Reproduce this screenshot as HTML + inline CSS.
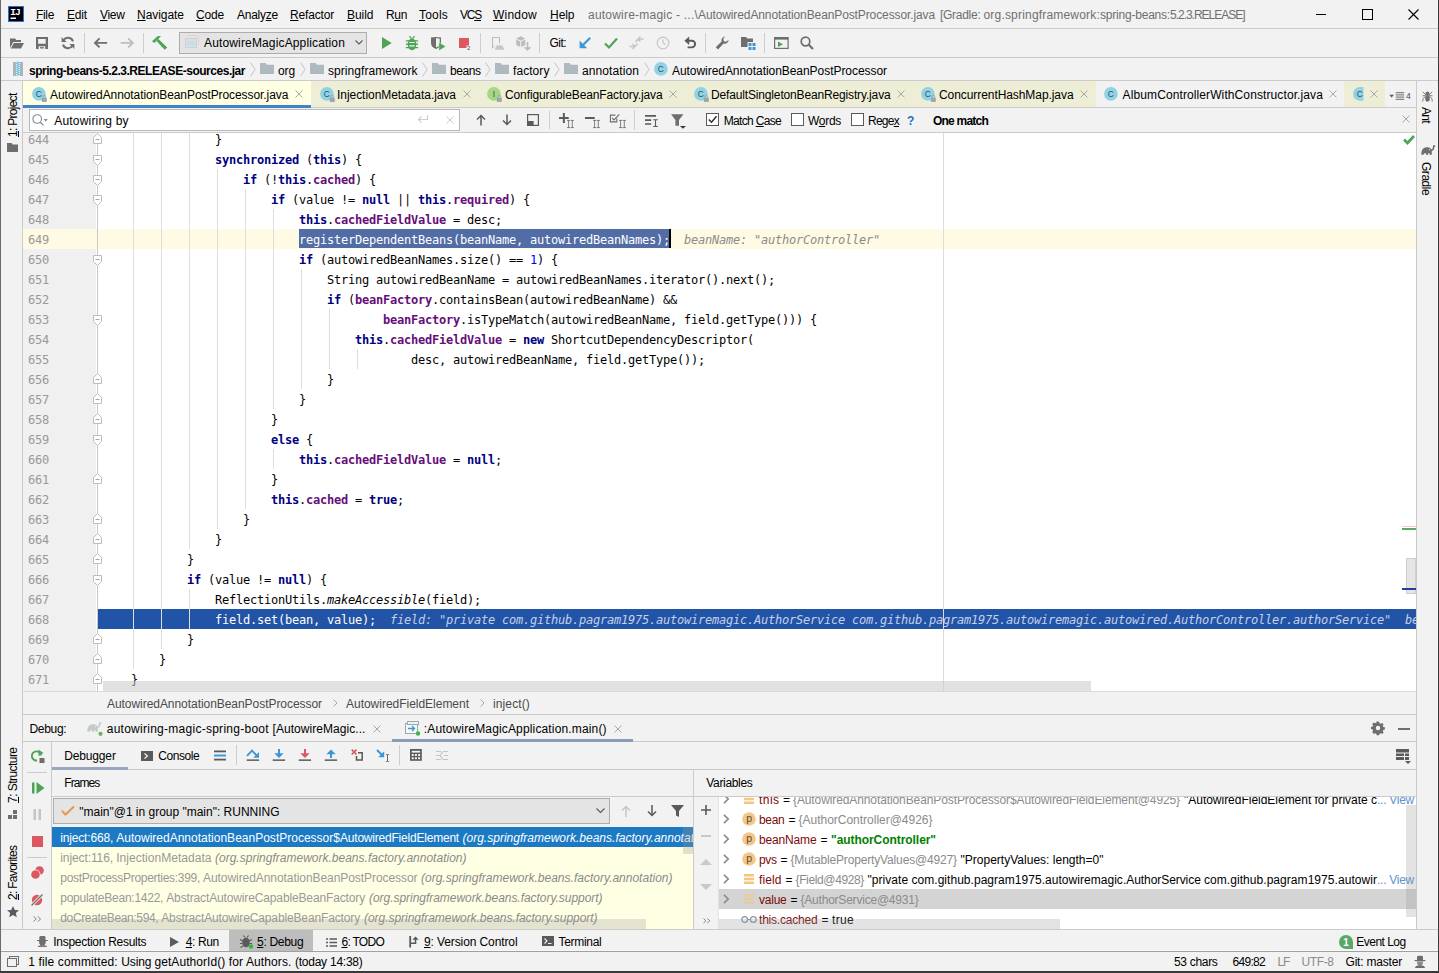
<!DOCTYPE html>
<html><head><meta charset="utf-8"><title>autowire-magic</title><style>
*{box-sizing:border-box;margin:0;padding:0}
html,body{width:1439px;height:973px;overflow:hidden;background:#f2f2f2}
body{font-family:"Liberation Sans",sans-serif;font-size:12px;color:#000;position:relative}
.a{position:absolute;white-space:pre}
.t{position:absolute;white-space:pre;line-height:16px;height:16px}
.m{font-family:"DejaVu Sans Mono","Liberation Mono",monospace;font-size:12px;letter-spacing:-0.2246px}
.hl{position:absolute;background:#cbcbcb}
.vl{position:absolute;background:#cbcbcb;width:1px}
u{text-decoration:underline;text-underline-offset:1px}
.kw{color:#000080;font-weight:bold}
.fd{color:#660e7a;font-weight:bold}
.nm{color:#0000ff}
.it{font-style:italic}
.hint{color:#8c8c8c;font-style:italic}
svg{position:absolute;overflow:visible}
</style></head><body>
<div class="t" style="left:36px;top:7px;letter-spacing:-0.340px;"><u>F</u>ile</div>
<div class="t" style="left:67px;top:7px;letter-spacing:-0.176px;"><u>E</u>dit</div>
<div class="t" style="left:100px;top:7px;letter-spacing:-0.328px;"><u>V</u>iew</div>
<div class="t" style="left:137px;top:7px;letter-spacing:-0.047px;"><u>N</u>avigate</div>
<div class="t" style="left:196px;top:7px;letter-spacing:-0.176px;"><u>C</u>ode</div>
<div class="t" style="left:237px;top:7px;letter-spacing:-0.246px;">Analy<u>z</u>e</div>
<div class="t" style="left:290px;top:7px;letter-spacing:-0.170px;"><u>R</u>efactor</div>
<div class="t" style="left:347px;top:7px;letter-spacing:-0.041px;"><u>B</u>uild</div>
<div class="t" style="left:386px;top:7px;letter-spacing:-0.349px;">R<u>u</u>n</div>
<div class="t" style="left:419px;top:7px;letter-spacing:0.197px;"><u>T</u>ools</div>
<div class="t" style="left:460px;top:7px;letter-spacing:-1.229px;">VC<u>S</u></div>
<div class="t" style="left:493px;top:7px;letter-spacing:0.219px;"><u>W</u>indow</div>
<div class="t" style="left:550px;top:7px;letter-spacing:-0.047px;"><u>H</u>elp</div>
<div class="t" style="left:588px;top:7px;color:#6f6f6f;letter-spacing:0.220px;">autowire-magic - ...\</div>
<div class="t" style="left:698px;top:7px;color:#6f6f6f;letter-spacing:-0.109px;">AutowiredAnnotationBeanPostProcessor.java</div>
<div class="t" style="left:940px;top:7px;color:#6f6f6f;letter-spacing:-0.281px;">[Gradle: </div>
<div class="t" style="left:983.5px;top:7px;color:#6f6f6f;letter-spacing:0.189px;">org.springframework:</div>
<div class="t" style="left:1100px;top:7px;color:#6f6f6f;letter-spacing:-0.209px;">spring-beans:</div>
<div class="t" style="left:1170px;top:7px;color:#6f6f6f;letter-spacing:-1.016px;">5.2.3.RELEASE]</div>
<svg style="left:8px;top:6px" width="16" height="16" viewBox="0 0 16 16"><rect x="0.5" y="0.5" width="15" height="15" fill="#000" stroke="#2b6fd6" stroke-width="1"/><text x="2.300" y="9.300" font-family="Liberation Mono,monospace" font-weight="bold" font-size="9.500" fill="#fff" letter-spacing="-0.900">IJ</text><rect x="2.500" y="11.500" width="5.500" height="1.500" fill="#fff"/></svg>
<svg style="left:1316px;top:8px" width="10" height="12" viewBox="0 0 10 12"><path d="M0 6.500H10" stroke="#000" stroke-width="1" fill="none"/></svg>
<svg style="left:1362px;top:9px" width="11" height="11" viewBox="0 0 11 11"><rect x="0.5" y="0.5" width="10" height="10" stroke="#000" stroke-width="1" fill="none"/></svg>
<svg style="left:1408px;top:9px" width="11" height="11" viewBox="0 0 11 11"><path d="M0.5 0.5L10.5 10.5M10.5 0.5L0.5 10.5" stroke="#000" stroke-width="1.1" fill="none"/></svg>
<div class="a" style="left:0px;top:28px;width:1439px;height:1px;background:#cbcbcb;"></div>
<svg style="left:10px;top:37px" width="14" height="12" viewBox="0 0 14 12"><path d="M0 1.5h5l1.5 1.5H11v2H3.2L0 11z" fill="#6e6e6e"/><path d="M3.8 6H14l-3 5.5H0.8z" fill="#6e6e6e"/></svg>
<svg style="left:36px;top:37px" width="12" height="12" viewBox="0 0 12 12"><path d="M0 0h12v12H0z M2.100 2.100v4.700h7.600V2.100z M2.600 9.200v2.800h6.600V9.200z" fill="#6e6e6e" fill-rule="evenodd"/><rect x="4" y="10.100" width="3.800" height="1.400" fill="#6e6e6e"/></svg>
<svg style="left:61px;top:36px" width="14" height="14" viewBox="0 0 14 14"><path d="M12 5.400A5.300 5.300 0 0 0 2.500 4.200" stroke="#6e6e6e" stroke-width="2" fill="none"/><path d="M0.600 1v5h5z" fill="#6e6e6e"/><path d="M2 8.600A5.300 5.300 0 0 0 11.500 9.800" stroke="#6e6e6e" stroke-width="2" fill="none"/><path d="M13.400 13V8H8.400z" fill="#6e6e6e"/></svg>
<div class="a" style="left:84px;top:33px;width:1px;height:20px;background:#cdcdcd;"></div>
<svg style="left:94px;top:37px" width="14" height="12" viewBox="0 0 14 12"><path d="M13.100 5.900H1.500M5.600 1.400L1 5.900l4.600 4.500" stroke="#6e6e6e" stroke-width="1.900" fill="none"/></svg>
<svg style="left:120px;top:37px" width="14" height="12" viewBox="0 0 14 12"><path d="M0.700 5.900H12.300M8.200 1.400l4.600 4.500-4.600 4.500" stroke="#bdbdbd" stroke-width="1.900" fill="none"/></svg>
<div class="a" style="left:143px;top:33px;width:1px;height:20px;background:#cdcdcd;"></div>
<svg style="left:152px;top:35px" width="16" height="16" viewBox="0 0 16 16"><path d="M0 6.300L5.800 1l3.200 0.200L2.300 8z" fill="#4fa357"/><path d="M6.400 4l8.800 8.500-2.500 2.300L4.500 6z" fill="#4fa357"/></svg>
<div class="a" style="left:179px;top:32px;width:188px;height:22px;border:1px solid #adadad;background:#e4e4e4;"></div>
<svg style="left:185px;top:35px" width="14" height="13" viewBox="0 0 14 13"><path d="M2.500 0.500h11v9" stroke="#d6d6d6" stroke-width="1" fill="none"/><rect x="0.500" y="3.500" width="11" height="9" fill="#dedede" stroke="#d0d0d0"/><rect x="2" y="6" width="8" height="5" fill="#bfe0ec"/></svg>
<div class="t" style="left:204px;top:35px;letter-spacing:0.150px;">AutowireMagicApplication</div>
<svg style="left:355px;top:40px" width="8" height="5" viewBox="0 0 8 5"><path d="M0.5 0.5L4 4l3.5-3.5" stroke="#5a5a5a" stroke-width="1.1" fill="none"/></svg>
<svg style="left:382px;top:37px" width="10" height="12" viewBox="0 0 10 12"><path d="M0 0L9.700 6 0 12z" fill="#4fa357"/></svg>
<svg style="left:405px;top:36px" width="14" height="15" viewBox="0 0 14 15"><path d="M4.500 0.200l2 2.400M9.500 0.200l-2 2.400" stroke="#4fa357" stroke-width="1.300"/><ellipse cx="7" cy="8.300" rx="4.400" ry="5.900" fill="#4fa357"/><path d="M0.800 4.800h12.400M0.800 8.200h12.400M0.800 11.700h12.400" stroke="#4fa357" stroke-width="1.300"/><path d="M4.300 6.500h5.400M4.300 9.900h5.400" stroke="#f2f2f2" stroke-width="1.100"/></svg>
<svg style="left:431px;top:37px" width="15" height="14" viewBox="0 0 15 14"><path d="M0 0.600C2 0.200 3.500 0 5 0c1.500 0 3 0.200 5 0.600V6c0 3-2 4.800-5 5.900C2 10.800 0 9 0 6z" fill="#6e6e6e"/><path d="M5 1.300c1.300 0 2.500 0.100 3.700 0.400V6c0 2.200-1.400 3.600-3.700 4.500z" fill="#f2f2f2"/><path d="M7.900 5.200L14.800 9.500 7.900 13.800z" fill="#4fa357" stroke="#f2f2f2" stroke-width="0.500"/></svg>
<svg style="left:459px;top:38px" width="13" height="13" viewBox="0 0 13 13"><rect x="0" y="0" width="10" height="10" fill="#db5860"/><rect x="7.500" y="7.500" width="4.500" height="5" fill="#f2f2f2"/><text x="8" y="12" font-size="6" font-family="Liberation Sans,sans-serif" fill="#4a4a6a">2</text></svg>
<div class="a" style="left:480px;top:33px;width:1px;height:20px;background:#cdcdcd;"></div>
<svg style="left:492px;top:37px" width="13" height="13" viewBox="0 0 13 13"><path d="M7.500 6.500V1.200a0.700 0.700 0 0 0-0.700-0.700H1.200a0.700 0.700 0 0 0-0.700 0.700V11.300" stroke="#bcbcbc" stroke-width="1.100" fill="none"/><path d="M0.500 10.500l1.800-1" stroke="#bcbcbc" stroke-width="1"/><path d="M3 12.800a4.500 4.500 0 0 1 9 0z" fill="#c3c7c9"/><path d="M4.300 7.500l1.200 1.600M10.700 7.500L9.500 9.100" stroke="#c3c7c9" stroke-width="0.800"/></svg>
<svg style="left:515.5px;top:36px" width="16" height="15" viewBox="0 0 16 15"><path d="M4.700 0.300L9.300 2.500 4.700 4.700 0.200 2.500z" fill="#bcbcbc"/><path d="M0.200 3.500L4.200 5.500V11L0.200 8.900z" fill="#bcbcbc"/><path d="M9.300 3.500L5.300 5.500V11L9.300 8.900z" fill="#bcbcbc"/><path d="M11.500 6v6" stroke="#bcbcbc" stroke-width="1.700"/><path d="M7.600 11.300h7.800L11.500 15z" fill="#bcbcbc"/></svg>
<div class="a" style="left:539px;top:33px;width:1px;height:20px;background:#cdcdcd;"></div>
<div class="t" style="left:549.5px;top:35px;letter-spacing:-0.543px;">Git:</div>
<svg style="left:579px;top:37px" width="12" height="12" viewBox="0 0 12 12"><path d="M11.200 0.800L4 8" stroke="#3c97d8" stroke-width="2.200" fill="none"/><path d="M0.600 3.600v7.600h7.600z" fill="#3c97d8"/></svg>
<svg style="left:604px;top:37px" width="14" height="12" viewBox="0 0 14 12"><path d="M1 6.5l4 4L13 1.5" stroke="#4fa357" stroke-width="2.2" fill="none"/></svg>
<svg style="left:629px;top:36px" width="15" height="14" viewBox="0 0 15 14"><path d="M14.500 3H9M11.500 0.500L9 3l2.500 2.500M9 3L6.500 6" stroke="#c6c6c6" stroke-width="1.400" fill="none"/><path d="M0.500 10.500H6M3.500 8L6 10.500 3.500 13M6 10.500L8.500 7.500" stroke="#c6c6c6" stroke-width="1.400" fill="none"/></svg>
<svg style="left:656px;top:36px" width="14" height="14" viewBox="0 0 14 14"><circle cx="7" cy="7" r="5.8" stroke="#c9c9c9" stroke-width="1.3" fill="none"/><path d="M7 3.5V7l2.5 1.8" stroke="#c9c9c9" stroke-width="1.3" fill="none"/></svg>
<svg style="left:684px;top:36px" width="12" height="14" viewBox="0 0 12 14"><path d="M3 4.800H7.800a3.300 3.300 0 0 1 0 6.600H3.600" stroke="#5a5a5a" stroke-width="1.900" fill="none"/><path d="M5.200 0.600L0.400 4.800l4.800 4.200z" fill="#5a5a5a"/></svg>
<div class="a" style="left:705px;top:33px;width:1px;height:20px;background:#cdcdcd;"></div>
<svg style="left:715px;top:36px" width="14" height="14" viewBox="0 0 14 14"><path d="M13.600 3.800A3.800 3.800 0 0 1 8.600 7.500L3 13.400 0.800 11.200 6.600 5.500A3.800 3.800 0 0 1 10.300 0.500L8.200 2.700 8.800 5.200 11.300 5.800z" fill="#6e6e6e"/></svg>
<svg style="left:741px;top:37px" width="15" height="13" viewBox="0 0 15 13"><path d="M0 0h5l1.500 1.500H12V10H0z" fill="#6e6e6e"/><rect x="6.500" y="5" width="8.500" height="8.500" fill="#f2f2f2"/><rect x="7.500" y="6" width="3" height="3" fill="#3c97d8"/><rect x="11.500" y="6" width="3" height="3" fill="#3c97d8"/><rect x="7.500" y="10" width="3" height="3" fill="#3c97d8"/><rect x="11.500" y="10" width="3" height="3" fill="#3c97d8"/></svg>
<div class="a" style="left:764px;top:33px;width:1px;height:20px;background:#cdcdcd;"></div>
<svg style="left:774px;top:37px" width="15" height="12" viewBox="0 0 15 12"><rect x="0.600" y="0.600" width="13.500" height="10.800" fill="none" stroke="#6e6e6e" stroke-width="1.200"/><rect x="0.600" y="0.600" width="13.500" height="2" fill="#6e6e6e"/><path d="M4 4.500L9 7.200 4 10z" fill="#4fa357"/></svg>
<svg style="left:800px;top:36px" width="14" height="14" viewBox="0 0 14 14"><circle cx="5.500" cy="5.500" r="4.300" stroke="#6e6e6e" stroke-width="1.700" fill="none"/><path d="M8.500 8.500l4.500 4.500" stroke="#6e6e6e" stroke-width="2.200"/></svg>
<div class="a" style="left:0px;top:57px;width:1439px;height:1px;background:#cbcbcb;"></div>
<svg style="left:13px;top:62px" width="10" height="14" viewBox="0 0 10 14"><rect x="0" y="0" width="10" height="14" fill="#a9b4bb"/><rect x="3.200" y="0" width="3.600" height="14" fill="#eef6f9"/><path d="M3.600 0L6.4 0.5L3.6 1.5L6.4 2.5L3.6 3.5L6.4 4.5L3.6 5.5L6.4 6.5L3.6 7.5L6.4 8.5L3.6 9.5L6.4 10.5L3.6 11.5L6.4 12.5L3.6 13.5" stroke="#3db2dc" stroke-width="0.800" fill="none"/></svg>
<div class="t" style="left:29px;top:63px;font-weight:bold;letter-spacing:-0.476px;">spring-beans-5.2.3.RELEASE-sources.jar</div>
<svg style="left:250px;top:62px" width="6" height="15" viewBox="0 0 6 15"><path d="M0.500 0.500L5 7.500 0.500 14.500" stroke="#c4c4c4" stroke-width="1" fill="none"/></svg>
<svg style="left:260px;top:63px" width="14" height="11" viewBox="0 0 14 11"><path d="M0 0h5.500l1.500 1.800H14V11H0z" fill="#aeb9c0"/></svg>
<div class="t" style="left:278px;top:63px;letter-spacing:-0.115px;">org</div>
<svg style="left:300px;top:62px" width="6" height="15" viewBox="0 0 6 15"><path d="M0.500 0.500L5 7.500 0.500 14.500" stroke="#c4c4c4" stroke-width="1" fill="none"/></svg>
<svg style="left:310px;top:63px" width="14" height="11" viewBox="0 0 14 11"><path d="M0 0h5.500l1.500 1.800H14V11H0z" fill="#aeb9c0"/></svg>
<div class="t" style="left:328px;top:63px;letter-spacing:0.053px;">springframework</div>
<svg style="left:422px;top:62px" width="6" height="15" viewBox="0 0 6 15"><path d="M0.500 0.500L5 7.500 0.500 14.500" stroke="#c4c4c4" stroke-width="1" fill="none"/></svg>
<svg style="left:432px;top:63px" width="14" height="11" viewBox="0 0 14 11"><path d="M0 0h5.500l1.500 1.800H14V11H0z" fill="#aeb9c0"/></svg>
<div class="t" style="left:450px;top:63px;letter-spacing:-0.441px;">beans</div>
<svg style="left:485px;top:62px" width="6" height="15" viewBox="0 0 6 15"><path d="M0.500 0.500L5 7.500 0.500 14.500" stroke="#c4c4c4" stroke-width="1" fill="none"/></svg>
<svg style="left:495px;top:63px" width="14" height="11" viewBox="0 0 14 11"><path d="M0 0h5.500l1.500 1.800H14V11H0z" fill="#aeb9c0"/></svg>
<div class="t" style="left:513px;top:63px;letter-spacing:0.069px;">factory</div>
<svg style="left:554px;top:62px" width="6" height="15" viewBox="0 0 6 15"><path d="M0.500 0.500L5 7.500 0.500 14.500" stroke="#c4c4c4" stroke-width="1" fill="none"/></svg>
<svg style="left:564px;top:63px" width="14" height="11" viewBox="0 0 14 11"><path d="M0 0h5.500l1.500 1.800H14V11H0z" fill="#aeb9c0"/></svg>
<div class="t" style="left:582px;top:63px;letter-spacing:0.094px;">annotation</div>
<svg style="left:644px;top:62px" width="6" height="15" viewBox="0 0 6 15"><path d="M0.500 0.500L5 7.500 0.500 14.500" stroke="#c4c4c4" stroke-width="1" fill="none"/></svg>
<svg style="left:654px;top:62px" width="15" height="15" viewBox="0 0 15 15"><circle cx="6.900" cy="6.900" r="6.800" fill="#8fd3e6"/><text x="6.900" y="9.900" text-anchor="middle" font-family="Liberation Sans,sans-serif" font-size="8.500" fill="#3e4a50">C</text></svg>
<div class="t" style="left:672px;top:63px;letter-spacing:-0.050px;">AutowiredAnnotationBeanPostProcessor</div>
<div class="a" style="left:0px;top:80px;width:1439px;height:1px;background:#cbcbcb;"></div>
<div class="a" style="left:22px;top:81px;width:1px;height:849px;background:#cbcbcb;"></div>
<div class="a" style="left:1416px;top:81px;width:1px;height:849px;background:#cbcbcb;"></div>
<div class="t" style="left:5px;top:137px;transform-origin:0 0;transform:rotate(-90deg);letter-spacing:-0.720px;"><u>1</u>: Project</div>
<svg style="left:7px;top:143px" width="11" height="9" viewBox="0 0 11 9"><path d="M0 0h4.500l1.200 1.500H11V9H0z" fill="#6e6e6e"/></svg>
<div class="t" style="left:5px;top:803px;transform-origin:0 0;transform:rotate(-90deg);letter-spacing:-0.546px;"><u>7</u>: Structure</div>
<svg style="left:8px;top:810px" width="9" height="9" viewBox="0 0 9 9"><rect x="5" y="0" width="4" height="4" fill="#6e6e6e"/><rect x="0" y="5" width="4" height="4" fill="#6e6e6e"/><rect x="5" y="5" width="4" height="4" fill="#6e6e6e"/></svg>
<div class="t" style="left:5px;top:900px;transform-origin:0 0;transform:rotate(-90deg);letter-spacing:-0.704px;"><u>2</u>: Favorites</div>
<svg style="left:7px;top:905.5px" width="12" height="11" viewBox="0 0 12 11"><path d="M6 0l1.800 3.900 4.200 0.400-3.200 2.800 1 4.100L6 9 2.200 11.200l1-4.100L0 4.300l4.200-0.400z" fill="#5a5a5a"/></svg>
<svg style="left:1422px;top:91px" width="11" height="11" viewBox="0 0 11 11"><circle cx="5.500" cy="2.300" r="1.900" fill="#6e6e6e"/><ellipse cx="5.500" cy="7.700" rx="2.300" ry="2.900" fill="#6e6e6e"/><rect x="4.700" y="3.500" width="1.600" height="2" fill="#6e6e6e"/><path d="M0.800 0.800L4.500 4.500M10.200 0.800L6.500 4.500M0.500 4.800L4.500 4.700M10.500 4.800L6.500 4.700M4.300 5.500C1.500 6 0.800 8 0.700 10.500M6.700 5.500C9.500 6 10.200 8 10.300 10.500" stroke="#6e6e6e" stroke-width="0.900" fill="none"/></svg>
<div class="t" style="left:1434px;top:107px;transform-origin:0 0;transform:rotate(90deg);letter-spacing:-0.672px;">Ant</div>
<svg style="left:1420.5px;top:145.3px" width="14" height="10" viewBox="0 0 14 10"><path d="M0.300 9.800C0.300 5.500 1.500 2.500 5.500 2.200C8.500 2 10.800 3.200 10.800 6V9.800H8.600V8.300H7.200V9.800H5V8.300H3.600L2.400 9.800z" fill="#6e6e6e"/><path d="M10 5.400C11.900 5.200 12.700 3.600 12.600 1.700C12.600 0.500 13.600 0.500 13.500 1.400" stroke="#6e6e6e" stroke-width="1.400" fill="none" stroke-linecap="round"/><circle cx="8.400" cy="4.600" r="0.600" fill="#f2f2f2"/></svg>
<div class="t" style="left:1434px;top:161.75px;transform-origin:0 0;transform:rotate(90deg);letter-spacing:-0.464px;">Gradle</div>
<div class="a" style="left:23px;top:81px;width:288px;height:27px;background:#ffffe4;"></div>
<div class="a" style="left:311px;top:81px;width:785px;height:27px;background:#eeeed6;"></div>
<div class="a" style="left:1344px;top:81px;width:41px;height:27px;background:#eeeed6;"></div>
<div class="a" style="left:311px;top:107px;width:1105px;height:1px;background:#cbcbcb;"></div>
<div class="a" style="left:23px;top:105px;width:288px;height:3px;background:#4083c9;"></div>
<svg style="left:32px;top:87px" width="15" height="15" viewBox="0 0 15 15"><circle cx="6.900" cy="6.900" r="6.800" fill="#8fd3e6"/><text x="6.900" y="9.900" text-anchor="middle" font-family="Liberation Sans,sans-serif" font-size="8.500" fill="#3e4a50">C</text><rect x="9.800" y="10.900" width="5" height="4" fill="#9aa7b0"/><path d="M10.900 11V9.600a1.400 1.400 0 0 1 2.800 0V11" stroke="#9aa7b0" stroke-width="1" fill="none"/></svg>
<div class="t" style="left:50px;top:87px;letter-spacing:-0.079px;">AutowiredAnnotationBeanPostProcessor.java</div>
<svg style="left:295px;top:90px" width="8" height="8" viewBox="0 0 8 8"><path d="M0.500 0.500l7 7M7.500 0.500l-7 7" stroke="#a8a8a8" stroke-width="1" fill="none"/></svg>
<svg style="left:320px;top:87px" width="15" height="15" viewBox="0 0 15 15"><circle cx="6.900" cy="6.900" r="6.800" fill="#8fd3e6"/><text x="6.900" y="9.900" text-anchor="middle" font-family="Liberation Sans,sans-serif" font-size="8.500" fill="#3e4a50">C</text><rect x="9.800" y="10.900" width="5" height="4" fill="#9aa7b0"/><path d="M10.900 11V9.600a1.400 1.400 0 0 1 2.800 0V11" stroke="#9aa7b0" stroke-width="1" fill="none"/></svg>
<div class="t" style="left:337px;top:87px;letter-spacing:-0.049px;">InjectionMetadata.java</div>
<svg style="left:463px;top:90px" width="8" height="8" viewBox="0 0 8 8"><path d="M0.500 0.500l7 7M7.500 0.500l-7 7" stroke="#a8a8a8" stroke-width="1" fill="none"/></svg>
<svg style="left:487px;top:87px" width="15" height="15" viewBox="0 0 15 15"><circle cx="6.900" cy="6.900" r="6.800" fill="#a5d785"/><text x="6.900" y="9.900" text-anchor="middle" font-family="Liberation Sans,sans-serif" font-size="8.500" fill="#3e4a50">I</text><rect x="9.800" y="10.900" width="5" height="4" fill="#9aa7b0"/><path d="M10.900 11V9.600a1.400 1.400 0 0 1 2.800 0V11" stroke="#9aa7b0" stroke-width="1" fill="none"/></svg>
<div class="t" style="left:505px;top:87px;letter-spacing:-0.109px;">ConfigurableBeanFactory.java</div>
<svg style="left:669px;top:90px" width="8" height="8" viewBox="0 0 8 8"><path d="M0.500 0.500l7 7M7.500 0.500l-7 7" stroke="#a8a8a8" stroke-width="1" fill="none"/></svg>
<svg style="left:694px;top:87px" width="15" height="15" viewBox="0 0 15 15"><circle cx="6.900" cy="6.900" r="6.800" fill="#8fd3e6"/><text x="6.900" y="9.900" text-anchor="middle" font-family="Liberation Sans,sans-serif" font-size="8.500" fill="#3e4a50">C</text><rect x="9.800" y="10.900" width="5" height="4" fill="#9aa7b0"/><path d="M10.900 11V9.600a1.400 1.400 0 0 1 2.800 0V11" stroke="#9aa7b0" stroke-width="1" fill="none"/></svg>
<div class="t" style="left:711px;top:87px;letter-spacing:-0.153px;">DefaultSingletonBeanRegistry.java</div>
<svg style="left:897px;top:90px" width="8" height="8" viewBox="0 0 8 8"><path d="M0.500 0.500l7 7M7.500 0.500l-7 7" stroke="#a8a8a8" stroke-width="1" fill="none"/></svg>
<svg style="left:921px;top:87px" width="15" height="15" viewBox="0 0 15 15"><circle cx="6.900" cy="6.900" r="6.800" fill="#8fd3e6"/><text x="6.900" y="9.900" text-anchor="middle" font-family="Liberation Sans,sans-serif" font-size="8.500" fill="#3e4a50">C</text><rect x="9.800" y="10.900" width="5" height="4" fill="#9aa7b0"/><path d="M10.900 11V9.600a1.400 1.400 0 0 1 2.800 0V11" stroke="#9aa7b0" stroke-width="1" fill="none"/></svg>
<div class="t" style="left:939px;top:87px;letter-spacing:-0.072px;">ConcurrentHashMap.java</div>
<svg style="left:1080px;top:90px" width="8" height="8" viewBox="0 0 8 8"><path d="M0.500 0.500l7 7M7.500 0.500l-7 7" stroke="#a8a8a8" stroke-width="1" fill="none"/></svg>
<svg style="left:1104px;top:87px" width="15" height="15" viewBox="0 0 15 15"><circle cx="6.900" cy="6.900" r="6.800" fill="#8fd3e6"/><text x="6.900" y="9.900" text-anchor="middle" font-family="Liberation Sans,sans-serif" font-size="8.500" fill="#3e4a50">C</text></svg>
<div class="t" style="left:1122.6px;top:87px;letter-spacing:0.104px;">AlbumControllerWithConstructor.java</div>
<svg style="left:1329px;top:90px" width="8" height="8" viewBox="0 0 8 8"><path d="M0.500 0.500l7 7M7.500 0.500l-7 7" stroke="#a8a8a8" stroke-width="1" fill="none"/></svg>
<svg style="left:1353px;top:87px" width="11" height="15" viewBox="0 0 11 15"><path d="M6.900 0.100A6.800 6.800 0 0 0 6.900 13.700H10.500V0.100z" fill="#8fd3e6"/><text x="6.900" y="9.900" text-anchor="middle" font-family="Liberation Sans,sans-serif" font-size="8.500" fill="#3e4a50">C</text></svg>
<svg style="left:1370px;top:90px" width="8" height="8" viewBox="0 0 8 8"><path d="M0.500 0.500l7 7M7.500 0.500l-7 7" stroke="#a8a8a8" stroke-width="1" fill="none"/></svg>
<svg style="left:1389px;top:92px" width="16" height="9" viewBox="0 0 16 9"><path d="M0.200 2.800h4.800L2.600 5.600z" fill="#5a5a5a"/><path d="M6.700 0.700h8.500M6.700 2.900h8.500M6.700 5.100h8.500M6.700 7.300h8.500" stroke="#5a5a5a" stroke-width="0.900"/></svg>
<div class="t" style="left:1406px;top:88px;font-size:8.500px;color:#3c4a7a;">4</div>
<div class="a" style="left:23px;top:108px;width:1393px;height:24px;background:#f2f2f2;"></div>
<div class="a" style="left:29px;top:109px;width:431px;height:22px;border:1px solid #b8b8b8;background:#fff"></div>
<svg style="left:32px;top:114px" width="16" height="12" viewBox="0 0 16 12"><circle cx="5.200" cy="5" r="4.300" stroke="#7f8b91" stroke-width="1.100" fill="none"/><path d="M8.300 8.200l3.200 3.200" stroke="#7f8b91" stroke-width="1.300"/><path d="M11.700 5h4L13.700 7.700z" fill="#7f8b91"/></svg>
<div class="t" style="left:54.25px;top:113px;letter-spacing:0.189px;">Autowiring by</div>
<svg style="left:417px;top:114px" width="12" height="11" viewBox="0 0 12 11"><path d="M10.500 1v4.500H2M4.500 2.500L1.500 5.500l3 3" stroke="#d0d0d0" stroke-width="1.200" fill="none"/></svg>
<svg style="left:446px;top:116px" width="8" height="8" viewBox="0 0 8 8"><path d="M0.500 0.500l7 7M7.500 0.500l-7 7" stroke="#cbcbcb" stroke-width="1" fill="none"/></svg>
<svg style="left:476px;top:114px" width="10" height="12" viewBox="0 0 10 12"><path d="M5 11.500V1.500M1 5.500l4-4 4 4" stroke="#5a5a5a" stroke-width="1.500" fill="none"/></svg>
<svg style="left:502px;top:114px" width="10" height="12" viewBox="0 0 10 12"><path d="M5 0.500v10M1 6.500l4 4 4-4" stroke="#5a5a5a" stroke-width="1.500" fill="none"/></svg>
<svg style="left:527px;top:114px" width="12" height="12" viewBox="0 0 12 12"><rect x="0.600" y="0.600" width="10.800" height="10.800" stroke="#5a5a5a" stroke-width="1.200" fill="none"/><rect x="0.600" y="7" width="6" height="4.400" fill="#5a5a5a"/></svg>
<div class="a" style="left:549px;top:111px;width:1px;height:18px;background:#cdcdcd;"></div>
<svg style="left:559px;top:113px" width="16" height="15" viewBox="0 0 16 15"><path d="M0 5h9.700M4.850 0v10" stroke="#5a5a5a" stroke-width="2"/><path d="M9.60 7.00v8M8.00 7.40h3.200M8.00 14.60h3.200" stroke="#6e6e6e" stroke-width="0.850" fill="none"/><path d="M13.30 7.00v8M11.70 7.40h3.200M11.70 14.60h3.200" stroke="#6e6e6e" stroke-width="0.850" fill="none"/></svg>
<svg style="left:585px;top:113px" width="16" height="15" viewBox="0 0 16 15"><path d="M0 5h9.700" stroke="#5a5a5a" stroke-width="2"/><path d="M9.60 7.00v8M8.00 7.40h3.200M8.00 14.60h3.200" stroke="#6e6e6e" stroke-width="0.850" fill="none"/><path d="M13.30 7.00v8M11.70 7.40h3.200M11.70 14.60h3.200" stroke="#6e6e6e" stroke-width="0.850" fill="none"/></svg>
<svg style="left:609px;top:113px" width="18" height="15" viewBox="0 0 18 15"><path d="M7.800 5.500v3.400H1.400V2.100h5" stroke="#6e6e6e" stroke-width="1.100" fill="none"/><path d="M3 4.800l2 2L10.300 1.300" stroke="#6e6e6e" stroke-width="1.200" fill="none"/><path d="M11.60 7.00v8M10.00 7.40h3.200M10.00 14.60h3.200" stroke="#6e6e6e" stroke-width="0.850" fill="none"/><path d="M15.30 7.00v8M13.70 7.40h3.200M13.70 14.60h3.200" stroke="#6e6e6e" stroke-width="0.850" fill="none"/></svg>
<div class="a" style="left:634px;top:110px;width:1px;height:20px;background:#cdcdcd;"></div>
<svg style="left:645px;top:115px" width="14" height="12" viewBox="0 0 14 12"><path d="M0 0.800h11M0 5.200h6.200M0 9h6.200" stroke="#5a5a5a" stroke-width="1.700"/><path d="M10.500 4.800v6.700M8.200 4.800h4.600M8.200 11.500h4.600" stroke="#5a5a5a" stroke-width="1.100"/></svg>
<svg style="left:671px;top:114px" width="16" height="15" viewBox="0 0 16 15"><path d="M0 0.300h12.400L8 6v5.700H4.400V6z" fill="#6e6e6e"/><path d="M8.900 12h6.100L11.950 14.700z" fill="#3a3a3a"/></svg>
<svg style="left:706px;top:113px" width="13" height="13" viewBox="0 0 13 13"><rect x="0.500" y="0.500" width="12" height="12" fill="#fff" stroke="#5a5a5a" stroke-width="1"/><path d="M2.800 6.500l2.700 2.800 5-6" stroke="#2b2b2b" stroke-width="1.400" fill="none"/></svg>
<div class="t" style="left:723.75px;top:113px;letter-spacing:-0.680px;">Match <u>C</u>ase</div>
<svg style="left:791px;top:113px" width="13" height="13" viewBox="0 0 13 13"><rect x="0.500" y="0.500" width="12" height="12" fill="#fff" stroke="#5a5a5a" stroke-width="1"/></svg>
<div class="t" style="left:808px;top:113px;letter-spacing:-0.294px;">W<u>o</u>rds</div>
<svg style="left:851px;top:113px" width="13" height="13" viewBox="0 0 13 13"><rect x="0.500" y="0.500" width="12" height="12" fill="#fff" stroke="#5a5a5a" stroke-width="1"/></svg>
<div class="t" style="left:868px;top:113px;letter-spacing:-0.738px;">Rege<u>x</u></div>
<div class="t" style="left:907px;top:113px;font-weight:bold;color:#2470c2;font-size:12px;">?</div>
<div class="t" style="left:933px;top:113px;font-weight:bold;letter-spacing:-0.780px;">One match</div>
<svg style="left:1402px;top:115px" width="8" height="8" viewBox="0 0 8 8"><path d="M0.500 0.500l7 7M7.500 0.500l-7 7" stroke="#a8a8a8" stroke-width="1" fill="none"/></svg>
<div class="a" style="left:23px;top:132px;width:1393px;height:1px;background:#cbcbcb;"></div>
<div class="a" style="left:23px;top:133px;width:1393px;height:558px;background:#fff;overflow:hidden">
<div class="a" style="left:0px;top:0px;width:73px;height:558px;background:#f0f0f0;"></div>
<div class="a" style="left:0px;top:96px;width:1393px;height:20px;background:#fffae3;"></div>
<div class="a" style="left:75px;top:476px;width:1318px;height:20px;background:#2154a6;"></div>
<div class="a" style="left:74px;top:0px;width:1px;height:558px;background:#c9c9c9;"></div>
<div class="a" style="left:920px;top:0px;width:1px;height:558px;background:#dcdcdc;"></div>
<div class="a" style="left:276px;top:96px;width:371px;height:19px;background:#526da5;"></div>
<div class="a" style="left:646px;top:96px;width:2px;height:19px;background:#000;"></div>
<div class="a" style="left:110px;top:0px;width:1px;height:536px;background:#dedede;"></div>
<div class="a" style="left:138px;top:0px;width:1px;height:516px;background:#dedede;"></div>
<div class="a" style="left:166px;top:0px;width:1px;height:416px;background:#dedede;"></div>
<div class="a" style="left:166px;top:456px;width:1px;height:40px;background:#dedede;"></div>
<div class="a" style="left:194px;top:36px;width:1px;height:360px;background:#dedede;"></div>
<div class="a" style="left:222px;top:56px;width:1px;height:320px;background:#dedede;"></div>
<div class="a" style="left:250px;top:76px;width:1px;height:200px;background:#dedede;"></div>
<div class="a" style="left:250px;top:316px;width:1px;height:20px;background:#dedede;"></div>
<div class="a" style="left:278px;top:136px;width:1px;height:120px;background:#dedede;"></div>
<div class="a" style="left:306px;top:176px;width:1px;height:60px;background:#dedede;"></div>
<div class="a" style="left:334px;top:216px;width:1px;height:20px;background:#dedede;"></div>
<div class="a m" style="left:192px;top:-3.5px;height:20px;line-height:20px">}</div>
<div class="a m" style="left:5px;top:-3.5px;height:20px;line-height:20px;color:#999">644</div>
<div class="a m" style="left:192px;top:16.5px;height:20px;line-height:20px"><span class="kw">synchronized</span> (<span class="kw">this</span>) {</div>
<div class="a m" style="left:5px;top:16.5px;height:20px;line-height:20px;color:#999">645</div>
<div class="a m" style="left:220px;top:36.5px;height:20px;line-height:20px"><span class="kw">if</span> (!<span class="kw">this</span>.<span class="fd">cached</span>) {</div>
<div class="a m" style="left:5px;top:36.5px;height:20px;line-height:20px;color:#999">646</div>
<div class="a m" style="left:248px;top:56.5px;height:20px;line-height:20px"><span class="kw">if</span> (value != <span class="kw">null</span> || <span class="kw">this</span>.<span class="fd">required</span>) {</div>
<div class="a m" style="left:5px;top:56.5px;height:20px;line-height:20px;color:#999">647</div>
<div class="a m" style="left:276px;top:76.5px;height:20px;line-height:20px"><span class="kw">this</span>.<span class="fd">cachedFieldValue</span> = desc;</div>
<div class="a m" style="left:5px;top:76.5px;height:20px;line-height:20px;color:#999">648</div>
<div class="a m" style="left:276px;top:96.5px;height:20px;line-height:20px"><span style="color:#fff">registerDependentBeans(beanName, autowiredBeanNames);</span><span class="hint">  beanName: "authorController"</span></div>
<div class="a m" style="left:5px;top:96.5px;height:20px;line-height:20px;color:#999">649</div>
<div class="a m" style="left:276px;top:116.5px;height:20px;line-height:20px"><span class="kw">if</span> (autowiredBeanNames.size() == <span class="nm">1</span>) {</div>
<div class="a m" style="left:5px;top:116.5px;height:20px;line-height:20px;color:#999">650</div>
<div class="a m" style="left:304px;top:136.5px;height:20px;line-height:20px">String autowiredBeanName = autowiredBeanNames.iterator().next();</div>
<div class="a m" style="left:5px;top:136.5px;height:20px;line-height:20px;color:#999">651</div>
<div class="a m" style="left:304px;top:156.5px;height:20px;line-height:20px"><span class="kw">if</span> (<span class="fd">beanFactory</span>.containsBean(autowiredBeanName) &amp;&amp;</div>
<div class="a m" style="left:5px;top:156.5px;height:20px;line-height:20px;color:#999">652</div>
<div class="a m" style="left:360px;top:176.5px;height:20px;line-height:20px"><span class="fd">beanFactory</span>.isTypeMatch(autowiredBeanName, field.getType())) {</div>
<div class="a m" style="left:5px;top:176.5px;height:20px;line-height:20px;color:#999">653</div>
<div class="a m" style="left:332px;top:196.5px;height:20px;line-height:20px"><span class="kw">this</span>.<span class="fd">cachedFieldValue</span> = <span class="kw">new</span> ShortcutDependencyDescriptor(</div>
<div class="a m" style="left:5px;top:196.5px;height:20px;line-height:20px;color:#999">654</div>
<div class="a m" style="left:388px;top:216.5px;height:20px;line-height:20px">desc, autowiredBeanName, field.getType());</div>
<div class="a m" style="left:5px;top:216.5px;height:20px;line-height:20px;color:#999">655</div>
<div class="a m" style="left:304px;top:236.5px;height:20px;line-height:20px">}</div>
<div class="a m" style="left:5px;top:236.5px;height:20px;line-height:20px;color:#999">656</div>
<div class="a m" style="left:276px;top:256.5px;height:20px;line-height:20px">}</div>
<div class="a m" style="left:5px;top:256.5px;height:20px;line-height:20px;color:#999">657</div>
<div class="a m" style="left:248px;top:276.5px;height:20px;line-height:20px">}</div>
<div class="a m" style="left:5px;top:276.5px;height:20px;line-height:20px;color:#999">658</div>
<div class="a m" style="left:248px;top:296.5px;height:20px;line-height:20px"><span class="kw">else</span> {</div>
<div class="a m" style="left:5px;top:296.5px;height:20px;line-height:20px;color:#999">659</div>
<div class="a m" style="left:276px;top:316.5px;height:20px;line-height:20px"><span class="kw">this</span>.<span class="fd">cachedFieldValue</span> = <span class="kw">null</span>;</div>
<div class="a m" style="left:5px;top:316.5px;height:20px;line-height:20px;color:#999">660</div>
<div class="a m" style="left:248px;top:336.5px;height:20px;line-height:20px">}</div>
<div class="a m" style="left:5px;top:336.5px;height:20px;line-height:20px;color:#999">661</div>
<div class="a m" style="left:248px;top:356.5px;height:20px;line-height:20px"><span class="kw">this</span>.<span class="fd">cached</span> = <span class="kw">true</span>;</div>
<div class="a m" style="left:5px;top:356.5px;height:20px;line-height:20px;color:#999">662</div>
<div class="a m" style="left:220px;top:376.5px;height:20px;line-height:20px">}</div>
<div class="a m" style="left:5px;top:376.5px;height:20px;line-height:20px;color:#999">663</div>
<div class="a m" style="left:192px;top:396.5px;height:20px;line-height:20px">}</div>
<div class="a m" style="left:5px;top:396.5px;height:20px;line-height:20px;color:#999">664</div>
<div class="a m" style="left:164px;top:416.5px;height:20px;line-height:20px">}</div>
<div class="a m" style="left:5px;top:416.5px;height:20px;line-height:20px;color:#999">665</div>
<div class="a m" style="left:164px;top:436.5px;height:20px;line-height:20px"><span class="kw">if</span> (value != <span class="kw">null</span>) {</div>
<div class="a m" style="left:5px;top:436.5px;height:20px;line-height:20px;color:#999">666</div>
<div class="a m" style="left:192px;top:456.5px;height:20px;line-height:20px">ReflectionUtils.<span class="it">makeAccessible</span>(field);</div>
<div class="a m" style="left:5px;top:456.5px;height:20px;line-height:20px;color:#999">667</div>
<div class="a m" style="left:192px;top:476.5px;height:20px;line-height:20px"><span style="color:#fff">field.set(bean, value);</span><span class="hint" style="color:#c4d0ea">  field: "private com.github.pagram1975.autowiremagic.AuthorService com.github.pagram1975.autowiremagic.autowired.AuthorController.authorService"  bean: {AuthorController@4926}</span></div>
<div class="a m" style="left:5px;top:476.5px;height:20px;line-height:20px;color:#999">668</div>
<div class="a m" style="left:164px;top:496.5px;height:20px;line-height:20px">}</div>
<div class="a m" style="left:5px;top:496.5px;height:20px;line-height:20px;color:#999">669</div>
<div class="a m" style="left:136px;top:516.5px;height:20px;line-height:20px">}</div>
<div class="a m" style="left:5px;top:516.5px;height:20px;line-height:20px;color:#999">670</div>
<div class="a m" style="left:108px;top:536.5px;height:20px;line-height:20px">}</div>
<div class="a m" style="left:5px;top:536.5px;height:20px;line-height:20px;color:#999">671</div>
<svg style="left:70px;top:22px" width="9" height="11" viewBox="0 0 9 11"><path d="M0.500 0.500h8v6l-4 4-4-4z" fill="#fff" stroke="#bcbcbc"/><path d="M2.500 4.500h4" stroke="#a8a8a8"/></svg>
<svg style="left:70px;top:42px" width="9" height="11" viewBox="0 0 9 11"><path d="M0.500 0.500h8v6l-4 4-4-4z" fill="#fff" stroke="#bcbcbc"/><path d="M2.500 4.500h4" stroke="#a8a8a8"/></svg>
<svg style="left:70px;top:62px" width="9" height="11" viewBox="0 0 9 11"><path d="M0.500 0.500h8v6l-4 4-4-4z" fill="#fff" stroke="#bcbcbc"/><path d="M2.500 4.500h4" stroke="#a8a8a8"/></svg>
<svg style="left:70px;top:122px" width="9" height="11" viewBox="0 0 9 11"><path d="M0.500 0.500h8v6l-4 4-4-4z" fill="#fff" stroke="#bcbcbc"/><path d="M2.500 4.500h4" stroke="#a8a8a8"/></svg>
<svg style="left:70px;top:182px" width="9" height="11" viewBox="0 0 9 11"><path d="M0.500 0.500h8v6l-4 4-4-4z" fill="#fff" stroke="#bcbcbc"/><path d="M2.500 4.500h4" stroke="#a8a8a8"/></svg>
<svg style="left:70px;top:302px" width="9" height="11" viewBox="0 0 9 11"><path d="M0.500 0.500h8v6l-4 4-4-4z" fill="#fff" stroke="#bcbcbc"/><path d="M2.500 4.500h4" stroke="#a8a8a8"/></svg>
<svg style="left:70px;top:442px" width="9" height="11" viewBox="0 0 9 11"><path d="M0.500 0.500h8v6l-4 4-4-4z" fill="#fff" stroke="#bcbcbc"/><path d="M2.500 4.500h4" stroke="#a8a8a8"/></svg>
<svg style="left:70px;top:0px" width="9" height="11" viewBox="0 0 9 11"><path d="M0.500 10.500h8v-6l-4-4-4 4z" fill="#fff" stroke="#bcbcbc"/><path d="M2.500 6.500h4" stroke="#a8a8a8"/></svg>
<svg style="left:70px;top:240px" width="9" height="11" viewBox="0 0 9 11"><path d="M0.500 10.500h8v-6l-4-4-4 4z" fill="#fff" stroke="#bcbcbc"/><path d="M2.500 6.500h4" stroke="#a8a8a8"/></svg>
<svg style="left:70px;top:260px" width="9" height="11" viewBox="0 0 9 11"><path d="M0.500 10.500h8v-6l-4-4-4 4z" fill="#fff" stroke="#bcbcbc"/><path d="M2.500 6.500h4" stroke="#a8a8a8"/></svg>
<svg style="left:70px;top:280px" width="9" height="11" viewBox="0 0 9 11"><path d="M0.500 10.500h8v-6l-4-4-4 4z" fill="#fff" stroke="#bcbcbc"/><path d="M2.500 6.500h4" stroke="#a8a8a8"/></svg>
<svg style="left:70px;top:340px" width="9" height="11" viewBox="0 0 9 11"><path d="M0.500 10.500h8v-6l-4-4-4 4z" fill="#fff" stroke="#bcbcbc"/><path d="M2.500 6.500h4" stroke="#a8a8a8"/></svg>
<svg style="left:70px;top:380px" width="9" height="11" viewBox="0 0 9 11"><path d="M0.500 10.500h8v-6l-4-4-4 4z" fill="#fff" stroke="#bcbcbc"/><path d="M2.500 6.500h4" stroke="#a8a8a8"/></svg>
<svg style="left:70px;top:400px" width="9" height="11" viewBox="0 0 9 11"><path d="M0.500 10.500h8v-6l-4-4-4 4z" fill="#fff" stroke="#bcbcbc"/><path d="M2.500 6.500h4" stroke="#a8a8a8"/></svg>
<svg style="left:70px;top:420px" width="9" height="11" viewBox="0 0 9 11"><path d="M0.500 10.500h8v-6l-4-4-4 4z" fill="#fff" stroke="#bcbcbc"/><path d="M2.500 6.500h4" stroke="#a8a8a8"/></svg>
<svg style="left:70px;top:500px" width="9" height="11" viewBox="0 0 9 11"><path d="M0.500 10.500h8v-6l-4-4-4 4z" fill="#fff" stroke="#bcbcbc"/><path d="M2.500 6.500h4" stroke="#a8a8a8"/></svg>
<svg style="left:70px;top:520px" width="9" height="11" viewBox="0 0 9 11"><path d="M0.500 10.500h8v-6l-4-4-4 4z" fill="#fff" stroke="#bcbcbc"/><path d="M2.500 6.500h4" stroke="#a8a8a8"/></svg>
<svg style="left:70px;top:540px" width="9" height="11" viewBox="0 0 9 11"><path d="M0.500 10.500h8v-6l-4-4-4 4z" fill="#fff" stroke="#bcbcbc"/><path d="M2.500 6.500h4" stroke="#a8a8a8"/></svg>
<div class="a" style="left:80px;top:548px;width:988px;height:10px;background:rgba(200,200,200,0.55);"></div>
<div class="a" style="left:1383px;top:425px;width:10px;height:36px;background:rgba(190,190,190,0.40);border:1px solid rgba(170,170,170,0.35)"></div>
<div class="a" style="left:1379px;top:393px;width:14px;height:1px;background:#f8cdbb;"></div>
<div class="a" style="left:1379px;top:395px;width:14px;height:2px;background:#59a869;"></div>
<div class="a" style="left:1379px;top:455px;width:14px;height:2px;background:#2040a0;"></div>
<svg style="left:1380px;top:2px" width="12" height="9" viewBox="0 0 12 9"><path d="M1 4.500l3.500 3.500L11 1" stroke="#4fa357" stroke-width="2.700" fill="none"/></svg>
</div>
<div class="a" style="left:23px;top:691px;width:1393px;height:1px;background:#d9d9d9;"></div>
<div class="t" style="left:107px;top:696px;color:#4a4a4a;letter-spacing:-0.050px;">AutowiredAnnotationBeanPostProcessor</div>
<div class="t" style="left:346px;top:696px;color:#4a4a4a;letter-spacing:-0.019px;">AutowiredFieldElement</div>
<div class="t" style="left:493px;top:696px;color:#4a4a4a;letter-spacing:0.123px;">inject()</div>
<svg style="left:333px;top:699px" width="5" height="8" viewBox="0 0 5 8"><path d="M0.500 0.500l3.500 3.500-3.500 3.500" stroke="#a8a8a8" stroke-width="1" fill="none"/></svg>
<svg style="left:480px;top:699px" width="5" height="8" viewBox="0 0 5 8"><path d="M0.500 0.500l3.500 3.500-3.500 3.500" stroke="#a8a8a8" stroke-width="1" fill="none"/></svg>
<div class="a" style="left:23px;top:714px;width:1393px;height:1px;background:#cbcbcb;"></div>
<div class="t" style="left:29.5px;top:721px;letter-spacing:-0.317px;">Debug:</div>
<svg style="left:86.5px;top:722px" width="16" height="13" viewBox="0 0 16 13"><path d="M0.300 9.800C0.300 5.500 1.500 2.500 5.500 2.200C8.500 2 10.800 3.200 10.800 6V9.800H8.600V8.300H7.200V9.800H5V8.300H3.600L2.400 9.800z" fill="#c3c9cc"/><path d="M10 5.400C11.900 5.200 12.700 3.600 12.600 1.700C12.600 0.500 13.600 0.500 13.500 1.400" stroke="#c3c9cc" stroke-width="1.400" fill="none" stroke-linecap="round"/><circle cx="8.400" cy="4.600" r="0.600" fill="#f2f2f2"/><circle cx="13.500" cy="11.800" r="2.100" fill="#62b65f"/></svg>
<div class="t" style="left:106.7px;top:721px;letter-spacing:0.266px;">autowiring-magic-spring-boot </div>
<div class="t" style="left:272.5px;top:721px;letter-spacing:0.056px;">[AutowireMagic...</div>
<svg style="left:373px;top:725px" width="8" height="8" viewBox="0 0 8 8"><path d="M0.500 0.500l7 7M7.500 0.500l-7 7" stroke="#a8a8a8" stroke-width="1" fill="none"/></svg>
<svg style="left:405px;top:721px" width="16" height="15" viewBox="0 0 16 15"><rect x="0.500" y="2.500" width="12" height="10" fill="#f7f7f7" stroke="#9aa7b0"/><rect x="2.500" y="0.500" width="11" height="3" fill="#f2f2f2" stroke="#9aa7b0"/><path d="M3 7.500h6M7 5l2.500 2.500L7 10" stroke="#3c97d8" stroke-width="1.300" fill="none"/><circle cx="13" cy="12.500" r="2.200" fill="#3cb54a"/></svg>
<div class="t" style="left:423.75px;top:721px;letter-spacing:0.154px;">:AutowireMagicApplication.main()</div>
<svg style="left:614px;top:725px" width="8" height="8" viewBox="0 0 8 8"><path d="M0.500 0.500l7 7M7.500 0.500l-7 7" stroke="#a8a8a8" stroke-width="1" fill="none"/></svg>
<div class="a" style="left:23px;top:741px;width:1393px;height:1px;background:#cbcbcb;"></div>
<div class="a" style="left:392px;top:739px;width:241px;height:3px;background:#8c9cb8;"></div>
<svg style="left:1371px;top:721px" width="14" height="14" viewBox="0 0 14 14"><path d="M7 0.500l1.300 0.200 0.400 1.700 1.200 0.500 1.500-0.900 1.600 1.600-0.900 1.500 0.500 1.200 1.700 0.400v2.300l-1.700 0.400-0.500 1.200 0.900 1.500-1.600 1.600-1.500-0.900-1.200 0.500-0.400 1.700H5.700l-0.400-1.700-1.200-0.500-1.500 0.900L1 11.600l0.900-1.500-0.500-1.200-1.700-0.400V6.200l1.700-0.400 0.500-1.200L1 3.100l1.600-1.600 1.500 0.900 1.200-0.500 0.400-1.700z" fill="#6e6e6e" transform="translate(0.300,0) scale(0.950)"/><circle cx="7" cy="7" r="2.200" fill="#f2f2f2"/></svg>
<div class="a" style="left:1398px;top:728px;width:12px;height:1.5px;background:#6e6e6e;"></div>
<div class="a" style="left:51px;top:742px;width:1px;height:188px;background:#cbcbcb;"></div>
<svg style="left:31px;top:749px" width="14" height="14" viewBox="0 0 14 14"><path d="M10 6.500A4.600 4.600 0 1 0 6 11.500" stroke="#4fa357" stroke-width="1.900" fill="none"/><path d="M7.500 0.500l5 3.600-5 3.200z" fill="#4fa357"/><rect x="8.500" y="9" width="5" height="5" fill="#6e6e6e"/></svg>
<div class="a" style="left:27px;top:772px;width:20px;height:1px;background:#cbcbcb;"></div>
<svg style="left:32px;top:782px" width="13" height="12" viewBox="0 0 13 12"><rect x="0" y="0.500" width="2.500" height="11" fill="#4fa357"/><path d="M4.500 0L12.500 6 4.500 12z" fill="#4fa357"/></svg>
<svg style="left:33px;top:809px" width="9" height="11" viewBox="0 0 9 11"><rect x="0.500" y="0" width="2.500" height="11" fill="#c4c4c4"/><rect x="5.500" y="0" width="2.500" height="11" fill="#c4c4c4"/></svg>
<div class="a" style="left:32px;top:836px;width:10.5px;height:10.5px;background:#db5860;"></div>
<div class="a" style="left:27px;top:857px;width:20px;height:1px;background:#cbcbcb;"></div>
<svg style="left:30px;top:866px" width="15" height="14" viewBox="0 0 15 14"><circle cx="9.500" cy="4.500" r="4.300" fill="#db5860"/><circle cx="5.500" cy="8.500" r="5" fill="#f2f2f2"/><circle cx="5.500" cy="8.500" r="4.300" fill="#db5860"/></svg>
<svg style="left:30px;top:893px" width="14" height="14" viewBox="0 0 14 14"><circle cx="7" cy="7" r="5.200" fill="#db5860"/><path d="M1 13L13 1" stroke="#f2f2f2" stroke-width="3"/><path d="M1.500 12.500L12.500 1.500" stroke="#6e6e6e" stroke-width="1.300"/></svg>
<svg style="left:33px;top:916px" width="9" height="6" viewBox="0 0 9 6"><path d="M0.500 0.500l2.800 2.500-2.800 2.500M4.800 0.500l2.800 2.500-2.800 2.500" stroke="#7a7a7a" stroke-width="0.900" fill="none"/></svg>
<div class="t" style="left:64.25px;top:748px;letter-spacing:-0.152px;">Debugger</div>
<svg style="left:141px;top:751px" width="12" height="10" viewBox="0 0 12 10"><rect width="12" height="10" fill="#5a5a5a"/><path d="M3.500 2.500L6.500 5 3.500 7.500" stroke="#f2f2f2" stroke-width="1.200" fill="none"/></svg>
<div class="t" style="left:158.3px;top:748px;letter-spacing:-0.447px;">Console</div>
<svg style="left:214px;top:750px" width="12" height="11" viewBox="0 0 12 11"><rect y="0.500" width="12" height="1.800" fill="#5a5a5a"/><rect y="4.500" width="12" height="2" fill="#3c97d8"/><rect y="8.700" width="12" height="1.800" fill="#5a5a5a"/></svg>
<div class="a" style="left:236px;top:745px;width:1px;height:20px;background:#cdcdcd;"></div>
<svg style="left:246px;top:749px" width="14" height="13" viewBox="0 0 14 13"><path d="M1 6.800L6 1.600l4.500 4.700" stroke="#3c97d8" stroke-width="1.900" fill="none"/><path d="M13 3v5.800H7.200z" fill="#3c97d8"/><rect x="0.700" y="10.400" width="12.400" height="1.500" fill="#5a5a5a"/></svg>
<svg style="left:272px;top:749px" width="14" height="13" viewBox="0 0 14 13"><path d="M7 0v5" stroke="#3c97d8" stroke-width="2"/><path d="M2.300 4.200h9.400L7 9z" fill="#3c97d8"/><rect x="0.700" y="10.400" width="12.400" height="1.500" fill="#5a5a5a"/></svg>
<svg style="left:298px;top:749px" width="14" height="13" viewBox="0 0 14 13"><path d="M7 0v5" stroke="#db5860" stroke-width="2"/><path d="M2.300 4.200h9.400L7 9z" fill="#db5860"/><rect x="0.700" y="10.400" width="12.400" height="1.500" fill="#5a5a5a"/></svg>
<svg style="left:324px;top:749px" width="14" height="13" viewBox="0 0 14 13"><path d="M7 9V4" stroke="#3c97d8" stroke-width="2"/><path d="M2.300 5.200h9.400L7 0.400z" fill="#3c97d8"/><rect x="0.700" y="10.400" width="12.400" height="1.500" fill="#5a5a5a"/></svg>
<svg style="left:351px;top:749px" width="12" height="12" viewBox="0 0 12 12"><path d="M0.700 0.700l4.800 4.800M5.500 0.700L0.700 5.500" stroke="#db5860" stroke-width="1.700"/><path d="M7 3.700h4.200v7.300H5.500V7" stroke="#5a5a5a" stroke-width="1.500" fill="none"/></svg>
<svg style="left:376px;top:749px" width="15" height="14" viewBox="0 0 15 14"><path d="M1 1l5.500 5.500" stroke="#3c97d8" stroke-width="2"/><path d="M8.200 2.300v6H2.200z" fill="#3c97d8"/><path d="M11.500 5.500v7M9.800 5.400c1 0 1.700 0.300 1.700 1M13.200 5.400c-1 0-1.700 0.300-1.700 1M9.800 12.600c1 0 1.700-0.300 1.700-1M13.200 12.600c-1 0-1.700-0.300-1.700-1" stroke="#5a5a5a" stroke-width="0.900" fill="none"/></svg>
<div class="a" style="left:399px;top:745px;width:1px;height:20px;background:#cdcdcd;"></div>
<svg style="left:410px;top:749px" width="12" height="12" viewBox="0 0 12 12"><rect x="0" y="0" width="11.800" height="11.800" fill="#5a5a5a"/><rect x="1.700" y="1.800" width="8.400" height="1.800" fill="#f2f2f2"/><g fill="#f2f2f2"><rect x="1.700" y="5" width="2" height="2"/><rect x="4.900" y="5" width="2" height="2"/><rect x="8.100" y="5" width="2" height="2"/><rect x="1.700" y="8.200" width="2" height="2"/><rect x="4.900" y="8.200" width="2" height="2"/><rect x="8.100" y="8.200" width="2" height="2"/></g></svg>
<svg style="left:436px;top:750px" width="12" height="11" viewBox="0 0 12 11"><path d="M0 1.500h5M0 5.500h4M0 9.500h5M7 1.500h5M7 9.500h5M8 5.500h4M4 5.500l3-4M4 5.500l3 4" stroke="#c4c4c4" stroke-width="1.200" fill="none"/></svg>
<svg style="left:1396px;top:749px" width="15" height="15" viewBox="0 0 15 15"><rect x="0" y="0" width="13" height="11" fill="#5a5a5a"/><path d="M0 4h13M0 7.500h13M8.500 4v7" stroke="#f2f2f2" stroke-width="1"/><path d="M9 12h6L12 15z" fill="#5a5a5a"/></svg>
<div class="a" style="left:52px;top:769px;width:1364px;height:1px;background:#cbcbcb;"></div>
<div class="a" style="left:52px;top:767px;width:76px;height:3px;background:#9aa7c0;"></div>
<div class="t" style="left:64.25px;top:775px;letter-spacing:-0.945px;">Frames</div>
<div class="t" style="left:706.25px;top:775px;letter-spacing:-0.321px;">Variables</div>
<div class="a" style="left:52px;top:796px;width:1364px;height:1px;background:#cbcbcb;"></div>
<div class="a" style="left:693px;top:770px;width:1px;height:160px;background:#cbcbcb;"></div>
<div class="a" style="left:53px;top:798px;width:557px;height:26px;border:1px solid #adadad;background:#e4e4e4"></div>
<svg style="left:61px;top:805px" width="14" height="11" viewBox="0 0 14 11"><path d="M1 6l3.500 3.500L13 1.500" stroke="#e8974a" stroke-width="2" fill="none"/><path d="M1 4.500l3.500 3.500" stroke="#f5c08a" stroke-width="1" fill="none"/></svg>
<div class="t" style="left:79.25px;top:804px;letter-spacing:-0.011px;">"main"@1 in group "main": RUNNING</div>
<svg style="left:596px;top:808px" width="9" height="6" viewBox="0 0 9 6"><path d="M0.500 0.500L4.500 4.500l4-4" stroke="#5a5a5a" stroke-width="1.100" fill="none"/></svg>
<svg style="left:621px;top:805px" width="10" height="12" viewBox="0 0 10 12"><path d="M5 12V1.500M1 5.500l4-4 4 4" stroke="#c6c6c6" stroke-width="1.500" fill="none"/></svg>
<svg style="left:647px;top:805px" width="10" height="12" viewBox="0 0 10 12"><path d="M5 0v10.500M1 6.500l4 4 4-4" stroke="#5a5a5a" stroke-width="1.500" fill="none"/></svg>
<svg style="left:671px;top:805px" width="13" height="12" viewBox="0 0 13 12"><path d="M0 0h13L8 6v6L5 10.500V6z" fill="#5a5a5a"/></svg>
<div class="a" style="left:52px;top:827px;width:641px;height:102px;background:#ffffe4;"></div>
<div class="a" style="left:52px;top:827px;width:641px;height:20px;background:#1c7ac5;"></div>
<div class="a" style="left:52px;top:827px;width:641px;height:102px;overflow:hidden">
<div class="t" style="left:8.25px;top:3px;color:#fff;letter-spacing:-0.171px;">inject:668, </div>
<div class="t" style="left:64.25px;top:3px;color:#fff;letter-spacing:0.007px;">AutowiredAnnotationBeanPostProcessor$</div>
<div class="t" style="left:288px;top:3px;color:#fff;letter-spacing:-0.210px;">AutowiredFieldElement</div>
<div class="t" style="left:410.5px;top:3px;color:#fff;font-style:italic;letter-spacing:0.006px;">(org.springframework.beans.factory.annotation)</div>
<div class="t" style="left:8.25px;top:23px;color:#999;letter-spacing:-0.096px;">inject:116, </div>
<div class="t" style="left:64.25px;top:23px;color:#999;letter-spacing:0.030px;">InjectionMetadata</div>
<div class="t" style="left:163px;top:23px;color:#8a8a8a;font-style:italic;letter-spacing:0.006px;">(org.springframework.beans.factory.annotation)</div>
<div class="t" style="left:8.25px;top:43px;color:#999;letter-spacing:-0.296px;">postProcessProperties:399, </div>
<div class="t" style="left:151px;top:43px;color:#999;letter-spacing:-0.064px;">AutowiredAnnotationBeanPostProcessor</div>
<div class="t" style="left:369px;top:43px;color:#8a8a8a;font-style:italic;letter-spacing:0.006px;">(org.springframework.beans.factory.annotation)</div>
<div class="t" style="left:8.25px;top:63px;color:#999;letter-spacing:-0.251px;">populateBean:1422, </div>
<div class="t" style="left:114.25px;top:63px;color:#999;letter-spacing:-0.138px;">AbstractAutowireCapableBeanFactory</div>
<div class="t" style="left:317px;top:63px;color:#8a8a8a;font-style:italic;letter-spacing:-0.040px;">(org.springframework.beans.factory.support)</div>
<div class="t" style="left:8.25px;top:83px;color:#999;letter-spacing:-0.357px;">doCreateBean:594, </div>
<div class="t" style="left:109.25px;top:83px;color:#999;letter-spacing:-0.138px;">AbstractAutowireCapableBeanFactory</div>
<div class="t" style="left:312px;top:83px;color:#8a8a8a;font-style:italic;letter-spacing:-0.040px;">(org.springframework.beans.factory.support)</div>
</div>
<div class="a" style="left:683px;top:827px;width:10px;height:27px;background:rgba(150,150,150,0.30);"></div>
<div class="a" style="left:52px;top:919px;width:594px;height:10px;background:rgba(150,150,150,0.27);"></div>
<svg style="left:701px;top:805px" width="10" height="10" viewBox="0 0 10 10"><path d="M5 0v10M0 5h10" stroke="#5a5a5a" stroke-width="1.600"/></svg>
<div class="a" style="left:701px;top:835px;width:10px;height:1.5px;background:#c9c9c9;"></div>
<svg style="left:700px;top:859px" width="12" height="6" viewBox="0 0 12 6"><path d="M0 6L6 0l6 6z" fill="#c9c9c9"/></svg>
<svg style="left:700px;top:884px" width="12" height="6" viewBox="0 0 12 6"><path d="M0 0l6 6 6-6z" fill="#c9c9c9"/></svg>
<svg style="left:703px;top:918px" width="8" height="6" viewBox="0 0 8 6"><path d="M0.500 0.500l2.500 2.300-2.500 2.300M4.300 0.500l2.500 2.300-2.500 2.300" stroke="#7a7a7a" stroke-width="0.900" fill="none"/></svg>
<div class="a" style="left:718px;top:797px;width:1px;height:132px;background:#e2e2e2;"></div>
<div class="a" style="left:719px;top:797px;width:697px;height:132px;background:#fff;overflow:hidden">
<div class="a" style="left:0px;top:92px;width:697px;height:20px;background:#d4d4d4"></div>
<svg style="left:4px;top:-3px" width="7" height="10" viewBox="0 0 7 10"><path d="M1 0.800L5.200 5 1 9.200" stroke="#8c8c8c" stroke-width="1.700" fill="none"/></svg>
<svg style="left:25px;top:-3.5px" width="10" height="10" viewBox="0 0 10 10"><path d="M0 1.300h10M0 5h10M0 8.700h10" stroke="#f5c77e" stroke-width="2.600"/></svg>
<div class="t" style="left:40px;top:-5px;color:#7a0a0a;letter-spacing:0.453px;">this</div>
<div class="t" style="left:64px;top:-5px;letter-spacing:-0.016px;">=</div>
<div class="t" style="left:74px;top:-5px;color:#8a8a8a;letter-spacing:-0.104px;">{AutowiredAnnotationBeanPostProcessor$AutowiredFieldElement@4925}</div>
<div class="t" style="left:465px;top:-5px;letter-spacing:-0.019px;">"AutowiredFieldElement for private c</div>
<div class="t" style="left:658px;top:-5px;color:#5d92cb;letter-spacing:-0.268px;">... View</div>
<svg style="left:4px;top:17px" width="7" height="10" viewBox="0 0 7 10"><path d="M1 0.800L5.200 5 1 9.200" stroke="#8c8c8c" stroke-width="1.700" fill="none"/></svg>
<svg style="left:23px;top:15px" width="14" height="14" viewBox="0 0 14 14"><circle cx="7" cy="7" r="6.800" fill="#f4c688"/><text x="7.200" y="9.800" text-anchor="middle" font-family="Liberation Sans,sans-serif" font-size="10.500" fill="#5a4a35">p</text></svg>
<div class="t" style="left:40px;top:15px;color:#7a0a0a;letter-spacing:-0.301px;">bean</div>
<div class="t" style="left:69.5px;top:15px;letter-spacing:-0.016px;">=</div>
<div class="t" style="left:79.5px;top:15px;color:#8a8a8a;letter-spacing:-0.012px;">{AuthorController@4926}</div>
<svg style="left:4px;top:37px" width="7" height="10" viewBox="0 0 7 10"><path d="M1 0.800L5.200 5 1 9.200" stroke="#8c8c8c" stroke-width="1.700" fill="none"/></svg>
<svg style="left:23px;top:35px" width="14" height="14" viewBox="0 0 14 14"><circle cx="7" cy="7" r="6.800" fill="#f4c688"/><text x="7.200" y="9.800" text-anchor="middle" font-family="Liberation Sans,sans-serif" font-size="10.500" fill="#5a4a35">p</text></svg>
<div class="t" style="left:40px;top:35px;color:#7a0a0a;letter-spacing:-0.152px;">beanName</div>
<div class="t" style="left:101.5px;top:35px;letter-spacing:-0.016px;">=</div>
<div class="t" style="left:112px;top:35px;color:#008000;font-weight:bold;letter-spacing:-0.058px;">"authorController"</div>
<svg style="left:4px;top:57px" width="7" height="10" viewBox="0 0 7 10"><path d="M1 0.800L5.200 5 1 9.200" stroke="#8c8c8c" stroke-width="1.700" fill="none"/></svg>
<svg style="left:23px;top:55px" width="14" height="14" viewBox="0 0 14 14"><circle cx="7" cy="7" r="6.800" fill="#f4c688"/><text x="7.200" y="9.800" text-anchor="middle" font-family="Liberation Sans,sans-serif" font-size="10.500" fill="#5a4a35">p</text></svg>
<div class="t" style="left:40px;top:55px;color:#7a0a0a;letter-spacing:-0.396px;">pvs</div>
<div class="t" style="left:61.5px;top:55px;letter-spacing:-0.016px;">=</div>
<div class="t" style="left:71.5px;top:55px;color:#8a8a8a;letter-spacing:-0.152px;">{MutablePropertyValues@4927}</div>
<div class="t" style="left:241.5px;top:55px;letter-spacing:0.011px;">"PropertyValues: length=0"</div>
<svg style="left:4px;top:77px" width="7" height="10" viewBox="0 0 7 10"><path d="M1 0.800L5.200 5 1 9.200" stroke="#8c8c8c" stroke-width="1.700" fill="none"/></svg>
<svg style="left:25px;top:76.5px" width="10" height="10" viewBox="0 0 10 10"><path d="M0 1.300h10M0 5h10M0 8.700h10" stroke="#f5c77e" stroke-width="2.600"/></svg>
<div class="t" style="left:40px;top:75px;color:#7a0a0a;letter-spacing:0.097px;">field</div>
<div class="t" style="left:66.5px;top:75px;letter-spacing:-0.016px;">=</div>
<div class="t" style="left:76.5px;top:75px;color:#8a8a8a;letter-spacing:-0.367px;">{Field@4928}</div>
<div class="t" style="left:148.5px;top:75px;letter-spacing:0.042px;">"private </div>
<div class="t" style="left:192.5px;top:75px;letter-spacing:0.037px;">com.github.pagram1975.autowiremagic.</div>
<div class="t" style="left:407.29999999999995px;top:75px;letter-spacing:-0.072px;">AuthorService </div>
<div class="t" style="left:485px;top:75px;letter-spacing:0.054px;">com.github.pagram1975.autowir</div>
<div class="t" style="left:658px;top:75px;color:#5d92cb;letter-spacing:-0.268px;">... View</div>
<svg style="left:4px;top:97px" width="7" height="10" viewBox="0 0 7 10"><path d="M1 0.800L5.200 5 1 9.200" stroke="#8c8c8c" stroke-width="1.700" fill="none"/></svg>
<svg style="left:25px;top:96.5px" width="10" height="10" viewBox="0 0 10 10"><path d="M0 1.300h10M0 5h10M0 8.700h10" stroke="#f5c77e" stroke-width="2.600" stroke-dasharray="1.300 0.600" opacity="0.850"/></svg>
<div class="t" style="left:40px;top:95px;color:#7a0a0a;letter-spacing:-0.237px;">value</div>
<div class="t" style="left:71.5px;top:95px;letter-spacing:-0.016px;">=</div>
<div class="t" style="left:81.5px;top:95px;color:#8a8a8a;letter-spacing:-0.213px;">{AuthorService@4931}</div>
<svg style="left:22px;top:119px" width="16" height="7" viewBox="0 0 16 7"><circle cx="3.700" cy="3.500" r="2.900" stroke="#8796a3" stroke-width="1.300" fill="none"/><circle cx="12.300" cy="3.500" r="2.900" stroke="#8796a3" stroke-width="1.300" fill="none"/><path d="M6.600 3.500h2.800" stroke="#8796a3" stroke-width="1"/></svg>
<div class="t" style="left:40px;top:115px;color:#7a0a0a;letter-spacing:-0.200px;">this.cached</div>
<div class="t" style="left:102.5px;top:115px;letter-spacing:-0.016px;">=</div>
<div class="t" style="left:113px;top:115px;letter-spacing:0.328px;">true</div>
<div class="a" style="left:0px;top:122px;width:341px;height:10px;background:rgba(150,150,150,0.27)"></div>
<div class="a" style="left:687px;top:8px;width:10px;height:112px;background:rgba(150,150,150,0.27)"></div>
</div>
<div class="a" style="left:0px;top:929px;width:1439px;height:1px;background:#cbcbcb;"></div>
<div class="a" style="left:0px;top:950px;width:1439px;height:1px;background:#f8f8f8;"></div>
<div class="a" style="left:229px;top:930px;width:84px;height:21px;background:#bdbdbd;"></div>
<svg style="left:37px;top:936px" width="11" height="11" viewBox="0 0 11 11"><path d="M2.300 4V1.500C2.300 0.500 3 0 4 0h2.800c1 0 1.700 0.500 1.700 1.500V4z" fill="#6e6e6e"/><rect x="0" y="4" width="10.800" height="1" fill="#6e6e6e"/><path d="M1.600 5h7.600L8.400 6.300 8.800 7.300 7.800 8.200V9.700H3V8.200L2 7.300 2.400 6.300z" fill="#6e6e6e"/><rect x="1" y="9.700" width="8.800" height="1.200" fill="#6e6e6e"/></svg>
<div class="t" style="left:53.25px;top:934px;letter-spacing:-0.281px;">Inspection Results</div>
<svg style="left:170px;top:937px" width="9" height="10" viewBox="0 0 9 10"><path d="M0 0l9 5-9 5z" fill="#5a5a5a"/></svg>
<div class="t" style="left:185.75px;top:934px;letter-spacing:-0.396px;"><u>4</u>: Run</div>
<svg style="left:240px;top:935px" width="14" height="14" viewBox="0 0 14 14"><ellipse cx="6" cy="7.500" rx="3.800" ry="4.800" fill="#5a5a5a"/><path d="M0 4.500l3 1.500M12 4.500L9 6M0 8.500h2.500M12 8.500H9.500M0.500 12.500l2.500-1.500M11.500 12.500L9 11M3.500 0.500l1.500 2M8.500 0.500L7 2.500" stroke="#5a5a5a" stroke-width="1.100"/><circle cx="11" cy="11.500" r="2.300" fill="#3cb54a"/></svg>
<div class="t" style="left:257px;top:934px;letter-spacing:-0.309px;"><u>5</u>: Debug</div>
<svg style="left:326px;top:938px" width="11" height="9" viewBox="0 0 11 9"><path d="M0 1h2M0 4.500h2M0 8h2M3.500 1H11M3.500 4.500H11M3.500 8H11" stroke="#5a5a5a" stroke-width="1.500"/></svg>
<div class="t" style="left:341.5px;top:934px;letter-spacing:-0.728px;"><u>6</u>: TODO</div>
<svg style="left:409px;top:936px" width="11" height="12" viewBox="0 0 11 12"><path d="M1.200 0v11.500" stroke="#5a5a5a" stroke-width="1.800" fill="none"/><path d="M1.200 7.300h5.300V2.500" stroke="#5a5a5a" stroke-width="1.600" fill="none"/><path d="M3.300 3.800L6.500 0.500l3.200 3.300z" fill="#5a5a5a"/></svg>
<div class="t" style="left:424px;top:934px;letter-spacing:-0.106px;"><u>9</u>: Version Control</div>
<svg style="left:542px;top:936px" width="12" height="10" viewBox="0 0 12 10"><rect width="12" height="10" fill="#5a5a5a"/><path d="M2.500 2.500L5 5 2.500 7.500M6 7.500h3.500" stroke="#f2f2f2" stroke-width="1.100" fill="none"/></svg>
<div class="t" style="left:558.5px;top:934px;letter-spacing:-0.295px;">Terminal</div>
<svg style="left:1339px;top:935px" width="14" height="14" viewBox="0 0 14 14"><path d="M7 0a7 7 0 0 1 7 7v7H7A7 7 0 0 1 7 0z" fill="#59a869"/><text x="7" y="10.500" text-anchor="middle" font-family="Liberation Sans,sans-serif" font-size="10" font-weight="bold" fill="#fff">1</text></svg>
<div class="t" style="left:1356.25px;top:934px;letter-spacing:-0.511px;">Event Log</div>
<div class="a" style="left:0px;top:951px;width:1439px;height:1px;background:#a0a0a0;"></div>
<svg style="left:7px;top:956px" width="12" height="11" viewBox="0 0 12 11"><rect x="2.500" y="0.500" width="9" height="8" fill="none" stroke="#6e6e6e"/><rect x="0.500" y="2.500" width="9" height="8" fill="#f2f2f2" stroke="#6e6e6e"/></svg>
<div class="t" style="left:28.25px;top:954px;letter-spacing:0.128px;">1 file committed: </div>
<div class="t" style="left:121.25px;top:954px;letter-spacing:-0.128px;">Using </div>
<div class="t" style="left:154.5px;top:954px;letter-spacing:0.062px;">getAuthorId() </div>
<div class="t" style="left:228.75px;top:954px;letter-spacing:0.119px;">for Authors. </div>
<div class="t" style="left:295px;top:954px;letter-spacing:-0.248px;">(today 14:38)</div>
<div class="t" style="left:1174px;top:954px;letter-spacing:-0.316px;">53 chars</div>
<div class="t" style="left:1232.5px;top:954px;letter-spacing:-0.701px;">649:82</div>
<div class="t" style="left:1277.5px;top:954px;color:#8a8a8a;letter-spacing:-1.258px;">LF</div>
<div class="t" style="left:1301.5px;top:954px;color:#8a8a8a;letter-spacing:-0.400px;">UTF-8</div>
<div class="t" style="left:1345.5px;top:954px;letter-spacing:-0.199px;">Git: master</div>
<svg style="left:1414px;top:955px" width="12" height="13" viewBox="0 0 12 13"><path d="M0 5h12l-1.500 1.200h-9z" fill="#6e6e6e"/><path d="M3 5V1.500c0-1 6-1 6 0V5z" fill="#6e6e6e"/><path d="M3 6.500c0 3 1 4.500 3 4.500s3-1.500 3-4.500z" fill="#8a8a8a"/><path d="M1 13c0-2 2-2.500 5-2.500s5 0.500 5 2.500z" fill="#6e6e6e"/></svg>
<div class="a" style="left:0px;top:0px;width:1px;height:973px;background:#6b6b6b;"></div>
<div class="a" style="left:1438px;top:0px;width:1px;height:973px;background:#3a3a3a;"></div>
<div class="a" style="left:0px;top:971px;width:1439px;height:2px;background:#3a3a3a;"></div>
</body></html>
